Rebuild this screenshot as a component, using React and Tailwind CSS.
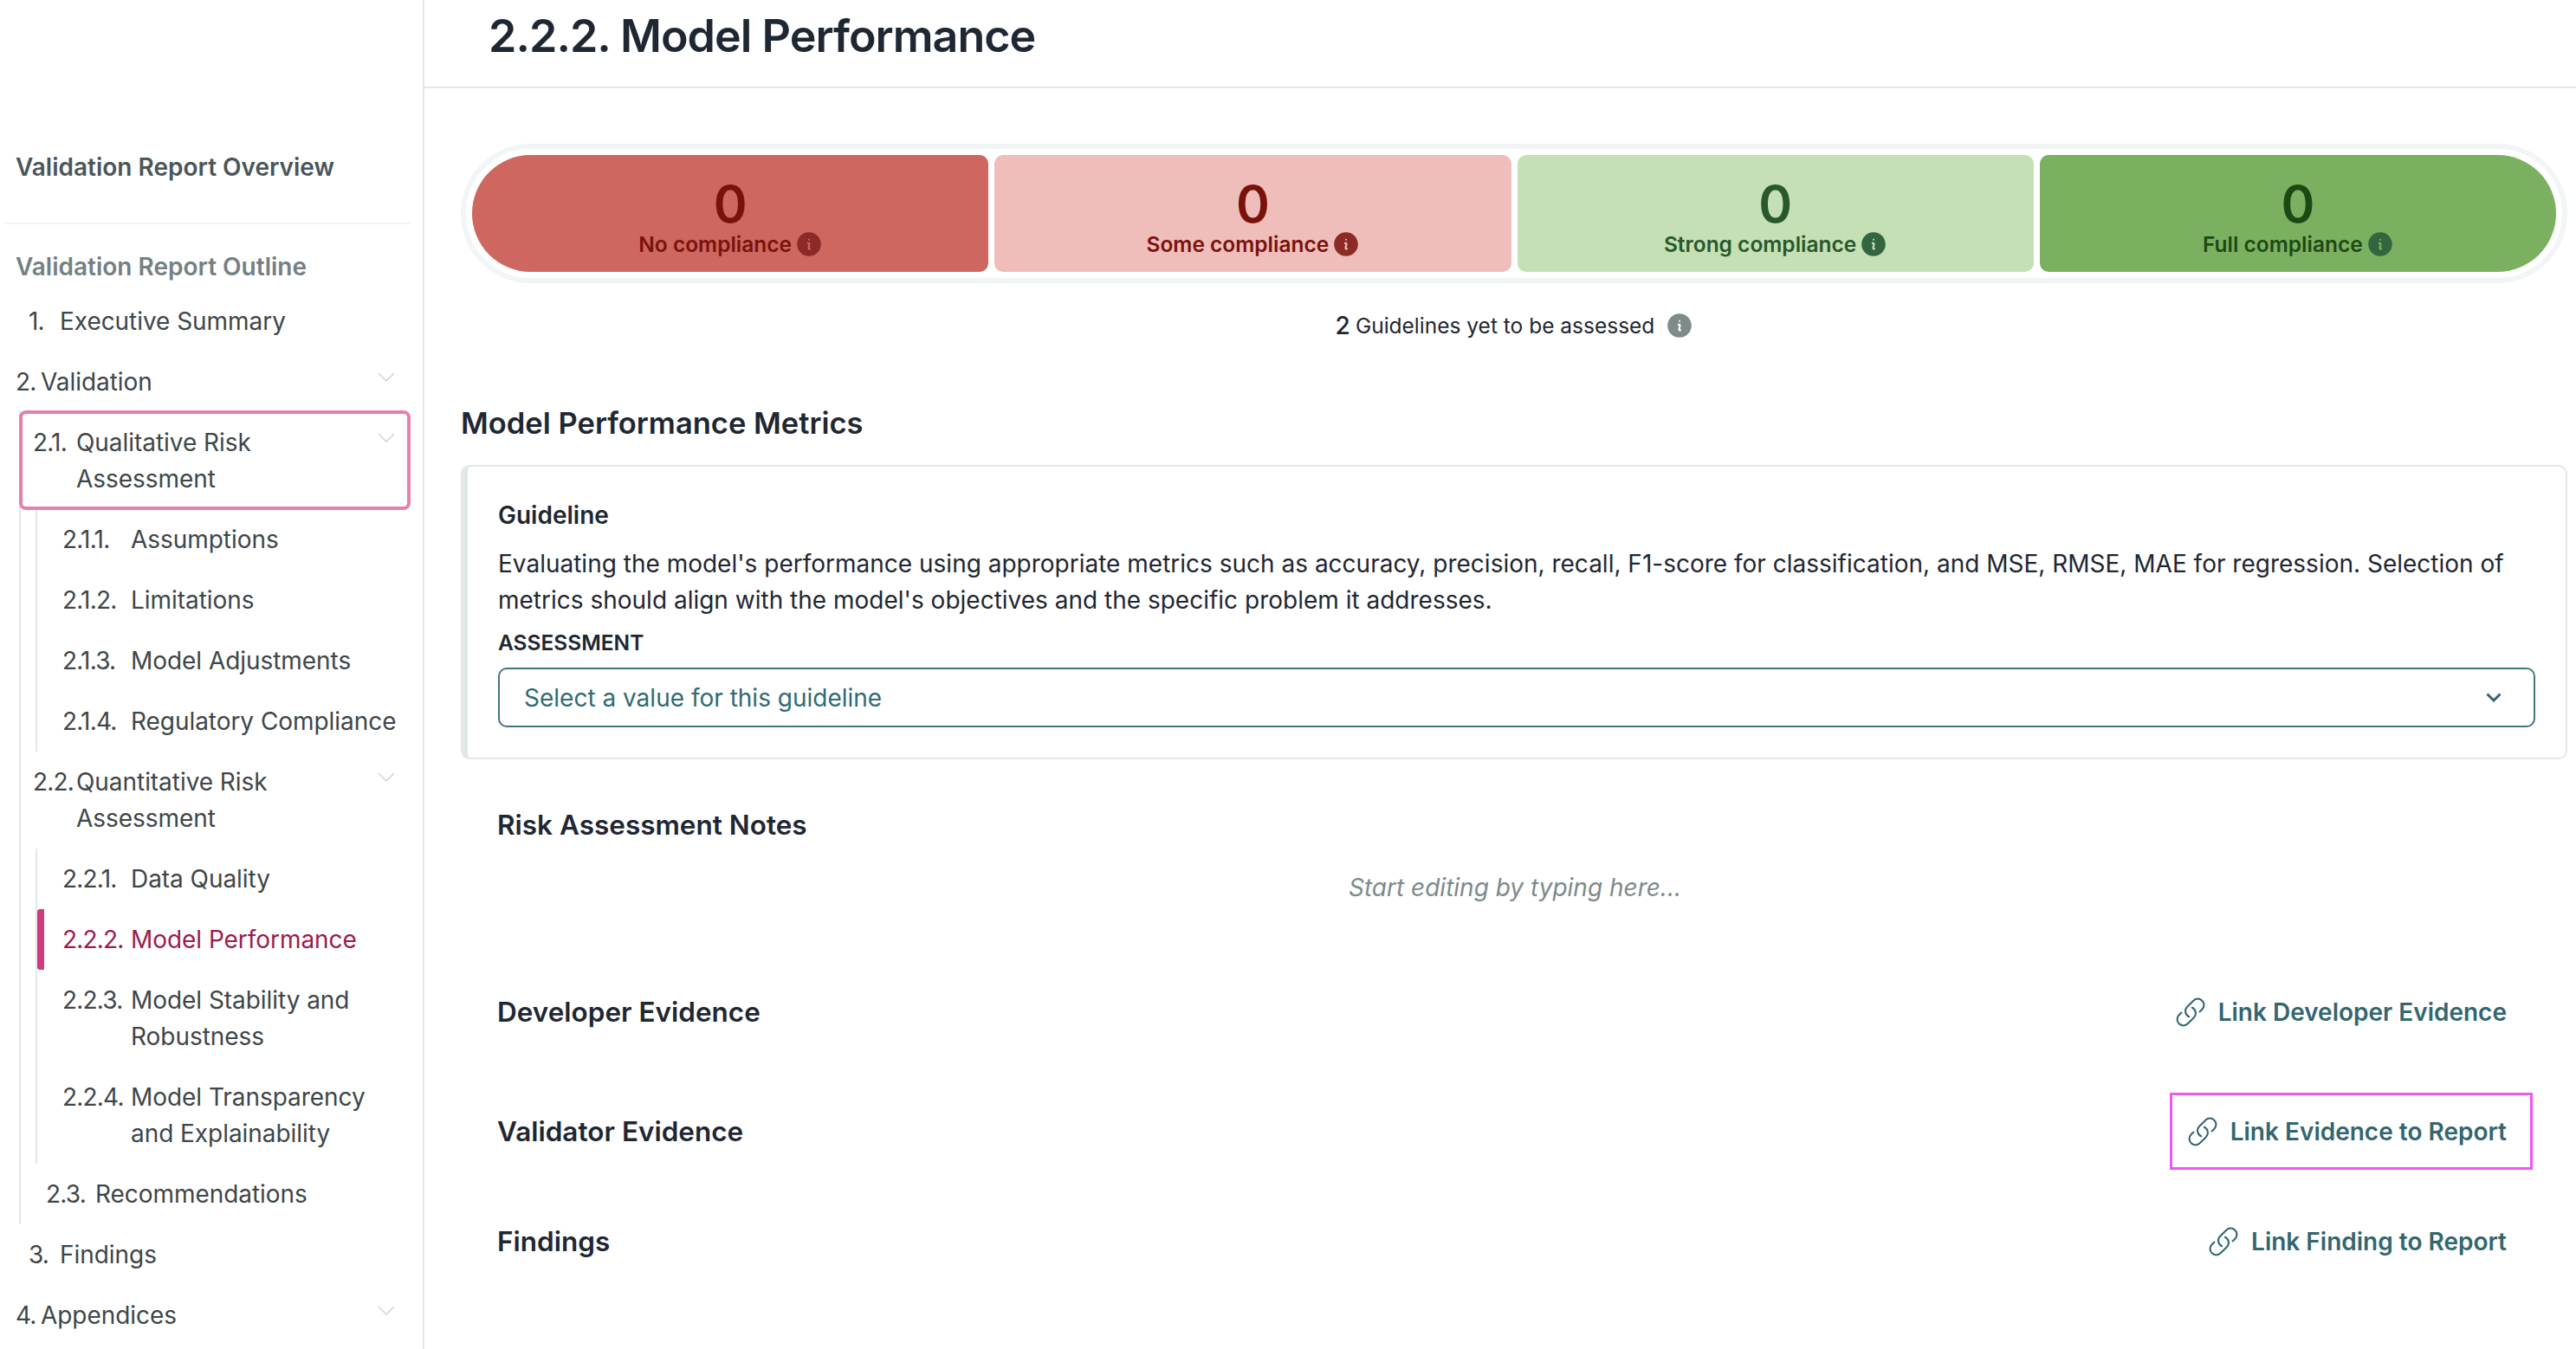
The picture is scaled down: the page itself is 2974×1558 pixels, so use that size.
import { HiInformationCircle } from 'react-icons/hi2'
import { HiOutlineLink } from 'react-icons/hi2'

function NavChevron() {
  return (
    <svg width="20" height="11" viewBox="0 0 20 11" fill="none" className="mt-[10px] shrink-0">
      <path d="M1 1l9 9 9-9" stroke="#cfd7d7" strokeWidth="1.6" />
    </svg>
  )
}

function NavRow({ num, label, pl, col, chevron, active, box }) {
  return (
    <li
      className={
        'relative flex justify-between whitespace-nowrap text-[28px] leading-[42px] ' +
        (box
          ? '-ml-[2px] -mt-[2px] -mb-[1px] pt-[12px] pb-[11px] pr-[14px] rounded-[8px] border-4 border-[#e580ad] bg-white '
          : 'py-[14px] pr-[18px] ') +
        (active ? 'text-[#9c1b50]' : 'text-[#3e4649]')
      }
      style={{ paddingLeft: pl }}
    >
      {active && <span className="absolute left-0 top-0 bottom-0 w-2 rounded-l-[3px] bg-[#cf3a7d]" />}
      <div className="flex">
        <span className="shrink-0 tracking-[-0.8px]" style={{ width: col }}>{num}</span>
        <span className="tracking-[-0.05px]">{label}</span>
      </div>
      {chevron && <NavChevron />}
    </li>
  )
}

function Sidebar() {
  return (
    <aside className="w-[490px] shrink-0 border-r-2 border-[#e2e8e8] pr-[14px] pt-[172px]">
      <p className="pl-[18px] text-[28px] leading-[42px] font-semibold text-[#4b5659]">Validation Report Overview</p>
      <div className="ml-1 mt-[43px] mb-[28px] h-[2px] bg-[#f1f3f4]" />
      <p className="pl-[18px] text-[28px] leading-[42px] font-semibold text-[#748083]">Validation Report Outline</p>
      <ul className="mt-[7px]">
        <NavRow num="1." label="Executive Summary" pl={33} col={36} />
        <NavRow num="2." label="Validation" pl={18} col={29} chevron />
        <li>
          <ul className="ml-[22px] border-l-2 border-[#e2e8e8]">
            <NavRow num="2.1." label={<>Qualitative Risk<br />Assessment</>} pl={12} col={50} chevron box />
            <li>
              <ul className="ml-[17px] border-l-2 border-[#e2e8e8]">
                <NavRow num="2.1.1." label="Assumptions" pl={29} col={79} />
                <NavRow num="2.1.2." label="Limitations" pl={29} col={79} />
                <NavRow num="2.1.3." label="Model Adjustments" pl={29} col={79} />
                <NavRow num="2.1.4." label="Regulatory Compliance" pl={29} col={79} />
              </ul>
            </li>
            <NavRow num="2.2." label={<>Quantitative Risk<br />Assessment</>} pl={14} col={50} chevron />
            <li>
              <ul className="ml-[17px] border-l-2 border-[#e2e8e8]">
                <NavRow num="2.2.1." label="Data Quality" pl={29} col={79} />
                <NavRow num="2.2.2." label="Model Performance" pl={29} col={79} active />
                <NavRow num="2.2.3." label={<>Model Stability and<br />Robustness</>} pl={29} col={79} />
                <NavRow num="2.2.4." label={<>Model Transparency<br />and Explainability</>} pl={29} col={79} />
              </ul>
            </li>
            <NavRow num="2.3." label="Recommendations" pl={29} col={57} />
          </ul>
        </li>
        <NavRow num="3." label="Findings" pl={33} col={36} />
        <NavRow num="4." label="Appendices" pl={18} col={29} chevron />
      </ul>
    </aside>
  )
}

function Segment({ label, className, numClass, textClass, iconClass }) {
  return (
    <div className={'flex h-[135px] flex-col items-center ' + className}>
      <span className={'mt-[23px] text-[59px] leading-[68px] font-semibold ' + numClass}>0</span>
      <span className={'-mt-[6px] flex items-center gap-[3px] pl-[2px] text-[24.5px] leading-[36px] font-semibold ' + textClass}>
        {label}
        <HiInformationCircle className={'h-[34px] w-[34px] ' + iconClass} />
      </span>
    </div>
  )
}

function LinkButton({ label, boxed }) {
  return (
    <button
      className={
        'flex h-[89px] items-center gap-[13px] border-[3px] pl-[16px] pr-[27px] text-[28px] font-semibold text-[#33666f] ' +
        (boxed ? 'border-[#f055f5]' : 'border-transparent')
      }
    >
      <HiOutlineLink className="h-[38px] w-[38px] stroke-[1.3]" />
      {label}
    </button>
  )
}

export default function App() {
  return (
    <div className="flex h-[1558px] overflow-hidden bg-white text-[#1f2733] [font-family:Inter,sans-serif]">
      <Sidebar />
      <main className="min-w-0 flex-1">
        <header className="h-[102px] border-b-2 border-[#e2e8e8] pl-[74px]">
          <h1 className="text-[52px] leading-[84px] font-semibold tracking-[-1px]">2.2.2. Model Performance</h1>
        </header>

        <div className="pl-[42px] pr-[10px]">
          {/* Compliance bar */}
          <div className="mt-[64px] grid grid-cols-4 gap-[7px] rounded-[80px] border-[6px] border-[#f1f5f6] p-[7px]">
            <Segment label="No compliance" className="rounded-l-[68px] rounded-r-[10px] bg-[#cd675f]" numClass="text-[#7a120c]" textClass="text-[#7a120c]" iconClass="text-[#8c2a27]" />
            <Segment label="Some compliance" className="rounded-[10px] bg-[#efbdba]" numClass="text-[#7a120c]" textClass="text-[#7a120c]" iconClass="text-[#8c2a27]" />
            <Segment label="Strong compliance" className="rounded-[10px] bg-[#c4e0b4]" numClass="text-[#28582c]" textClass="text-[#28582c]" iconClass="text-[#33663f]" />
            <Segment label="Full compliance" className="rounded-l-[10px] rounded-r-[68px] bg-[#7cb061]" numClass="text-[#1d4a14]" textClass="text-[#1d4a14]" iconClass="text-[#33663f]" />
          </div>

          <div className="mt-[30px] flex h-[38px] items-center justify-center pl-[2px] text-[24.5px]">
            <span className="mr-[6px] text-[28px] font-medium">2</span>
            Guidelines yet to be assessed
            <HiInformationCircle className="ml-[12px] h-[34px] w-[34px] text-[#7f8a8b]" />
          </div>

          <h2 className="mt-[69px] text-[34.5px] leading-[50px] font-semibold">Model Performance Metrics</h2>

          {/* Guideline card */}
          <section className="mt-[23px] rounded-[10px] border-2 border-l-8 border-[#e2e8e8] pb-[35px] pl-[35px] pr-[35px] pt-[35px]">
            <h3 className="text-[28px] leading-[42px] font-semibold">Guideline</h3>
            <p className="mt-[14px] text-[28px] leading-[42px]">
              Evaluating the model's performance using appropriate metrics such as accuracy, precision, recall, F1-score for classification, and MSE, RMSE, MAE for regression. Selection of metrics should align with the model's objectives and the specific problem it addresses.
            </p>
            <div className="mt-[10px] text-[24.5px] leading-[36px] font-semibold">ASSESSMENT</div>
            <div className="mt-[11px] flex h-[69px] items-center justify-between rounded-[10px] border-2 border-[#41767f] pl-[28px] pr-[37px] text-[28px] text-[#2f6b73]">
              Select a value for this guideline
              <svg width="18" height="11" viewBox="0 0 18 11" fill="none">
                <path d="M1.5 1.5L9 9l7.5-7.5" stroke="#33666f" strokeWidth="3" />
              </svg>
            </div>
          </section>

          <div className="pl-[42px] pr-[40px]">
            <h3 className="mt-[52px] text-[31.5px] leading-[48px] font-semibold">Risk Assessment Notes</h3>
            <p className="mt-[27px] text-center text-[28px] leading-[42px] italic text-[#7d8a8c]">Start editing by typing here...</p>

            <div className="mt-[78px] flex items-center justify-between">
              <h3 className="text-[31.5px] font-semibold">Developer Evidence</h3>
              <LinkButton label="Link Developer Evidence" />
            </div>
            <div className="mt-[49px] flex items-center justify-between">
              <h3 className="text-[31.5px] font-semibold">Validator Evidence</h3>
              <LinkButton label="Link Evidence to Report" boxed />
            </div>
            <div className="mt-[38px] flex items-center justify-between">
              <h3 className="text-[31.5px] font-semibold">Findings</h3>
              <LinkButton label="Link Finding to Report" />
            </div>
          </div>
        </div>
      </main>
    </div>
  )
}
